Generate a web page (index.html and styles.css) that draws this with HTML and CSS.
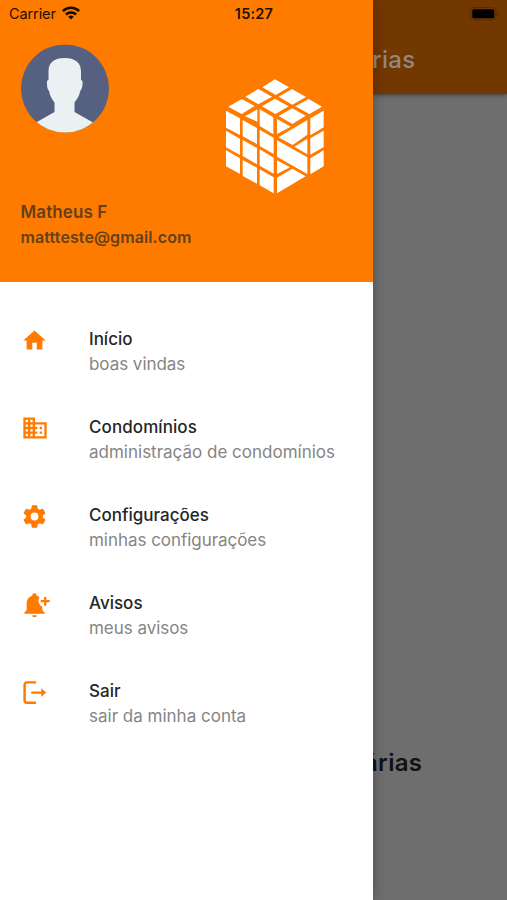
FILE: index.html
```html
<!DOCTYPE html>
<html lang="pt-BR">
<head>
<meta charset="utf-8">
<meta name="viewport" content="width=device-width, initial-scale=1">
<title>Menu</title>
<link rel="stylesheet" href="styles.css">
</head>
<body>
<div class="screen">
  <div class="page">
    <header class="appbar"><span class="appbar-title">rias</span></header>
    <main class="page-body"><span class="page-label">árias</span></main>
  </div>

  <aside class="drawer">
    <header class="profile">
      <div class="profile-top">
        <svg class="avatar" viewBox="0 0 88 88">
          <defs><clipPath id="round"><circle cx="44" cy="44" r="44"/></clipPath></defs>
          <g clip-path="url(#round)">
            <rect width="88" height="88" fill="#566080"/>
            <path fill="#e9f1f2" d="M27.500 27C27.500 18 33 13.500 43.500 13.500S60 18 60 27v8.500c1.500 0 1.800 2 1.500 4.500-.3 3-1 5.500-2.200 6.200C58.500 51 56 54.500 53.500 58v9.500L72 78v12H15V78l18.500-10.500V58C31 54.500 28.700 51 28 46.200 26.700 45.500 26.200 43 26 40c-.2-2.500 0-4.500 1.500-4.500z"/>
          </g>
        </svg>
        <svg class="logo" viewBox="0 0 360 390" fill="#fff">
          <path d="M180 28l42 24-40 23-40-23zM130 57l41 23-41 23-39-23zM231 57l42 24-41 23-41-24zM80 87l39 21-39 24-40-22zM180 86l41 23-40 23-40-23zM281 87l40 23-38 22-42-23zM232 115l40 22-40 25-41-24z"/>
          <path d="M33 122l42 23v50l-42-22zM33 182l42 24v49l-42-23zM33 241l42 24v47l-42-23zM90 139l37-21v37zM83 150l43 24v48l-43-23zM83 210l43 24v49l-43-25zM83 270l43 23v48l-43-23zM134 118l41 24v51l-41-25zM134 179l42 24v49l-42-24zM134 238l42 25v48l-42-24zM134 298l42 24v48l-42-24z"/>
          <path d="M186 147l41 23-41 22zM190 202l87-52v44l-44 31zM238 230l39-24v47zM186 211l91 51v50l-91-52zM186 271l39 21-39 20zM186 323l46-27 40 23-86 51zM286 145l40-23v50l-40 24zM286 205l40-23v49l-40 23zM286 265l40-24v48l-40 24z"/>
        </svg>
      </div>
      <div class="name">Matheus F</div>
      <div class="email">mattteste@gmail.com</div>
    </header>

    <nav class="menu">
      <a class="item">
        <svg class="icon" viewBox="0 0 24 24"><path d="M10 20v-6h4v6h5v-8h3L12 3 2 12h3v8z"/></svg>
        <span class="text"><span class="title">Início</span><span class="sub">boas vindas</span></span>
      </a>
      <a class="item">
        <svg class="icon wide" viewBox="0 0 24 24"><path d="M12 7V3H2v18h20V7H12zM6 19H4v-2h2v2zm0-4H4v-2h2v2zm0-4H4V9h2v2zm0-4H4V5h2v2zm4 12H8v-2h2v2zm0-4H8v-2h2v2zm0-4H8V9h2v2zm0-4H8V5h2v2zm10 12h-8v-2h2v-2h-2v-2h2v-2h-2V9h8v10zm-2-8h-2v2h2v-2zm0 4h-2v2h2v-2z"/></svg>
        <span class="text"><span class="title spaced">Condomínios</span><span class="sub even">administração de condomínios</span></span>
      </a>
      <a class="item">
        <svg class="icon" viewBox="0 0 24 24"><path d="M19.430 12.980c.04-.32.07-.64.07-.98s-.03-.66-.07-.98l2.110-1.650c.19-.15.24-.42.12-.64l-2-3.460c-.12-.22-.39-.3-.61-.22l-2.490 1c-.52-.4-1.080-.73-1.690-.98l-.38-2.650C14.460 2.180 14.250 2 14 2h-4c-.25 0-.46.18-.49.42l-.38 2.650c-.61.25-1.170.59-1.690.98l-2.490-1c-.23-.09-.49 0-.61.22l-2 3.460c-.13.22-.07.49.12.64l2.110 1.650c-.04.32-.07.65-.07.98s.03.66.07.98l-2.110 1.650c-.19.15-.24.42-.12.64l2 3.460c.12.22.39.3.61.22l2.490-1c.52.4 1.080.73 1.690.98l.38 2.650c.03.24.24.42.49.42h4c.25 0 .46-.18.49-.42l.38-2.650c.61-.25 1.170-.59 1.690-.98l2.490 1c.23.09.49 0 .61-.22l2-3.460c.12-.22.07-.49-.12-.64l-2.110-1.650zM12 15.500a3.500 3.500 0 1 1 0-7 3.500 3.500 0 0 1 0 7z"/></svg>
        <span class="text"><span class="title">Configurações</span><span class="sub">minhas configurações</span></span>
      </a>
      <a class="item">
        <svg class="icon" viewBox="0 0 24 24"><path d="M10 21.500h4a2 1.800 0 0 1-4 0zM21 19v1.300H3V19l2-2v-6c0-3.100 2-5.800 5-6.700V4a2 2 0 0 1 4 0v.3c.9.300 1.700.7 2.400 1.300A6 6 0 0 0 19 14.200V17zM17.500 8.100h3V5.300h2v2.800h3v2h-3v3h-2v-3h-3z"/></svg>
        <span class="text"><span class="title">Avisos</span><span class="sub">meus avisos</span></span>
      </a>
      <a class="item">
        <svg class="icon" viewBox="0 0 24 24"><path d="M12.500 3H5.200a2 2 0 0 0-2 2v14.200a2 2 0 0 0 2 2h7.300M10 12.100h9" fill="none" stroke="#ff7b00" stroke-width="2.200" stroke-linecap="round"/><path d="M18 8.300l4.300 3.800-4.300 3.800z"/></svg>
        <span class="text"><span class="title">Sair</span><span class="sub even">sair da minha conta</span></span>
      </a>
    </nav>
  </aside>

  <div class="statusbar">
    <div class="carrier">Carrier
      <svg class="wifi" viewBox="0 0 18 14" fill="none" stroke="#150b00" stroke-width="2.500"><path d="M.9 5.200a11.500 11.500 0 0 1 16.200 0M3.900 8.500a7.200 7.200 0 0 1 10.200 0"/><path d="M9 13.500L6.200 10.800a4 4 0 0 1 5.600 0z" fill="#150b00" stroke="none"/></svg>
    </div>
    <div class="clock">15:27</div>
    <svg class="battery" viewBox="0 0 30 14"><rect x=".5" y=".5" width="25.500" height="12.500" rx="3.500" fill="none" stroke="#5a2c00"/><rect x="2.300" y="2.300" width="22" height="9" rx="1.500" fill="#000"/><path d="M27.500 4.700q2 2 0 4z" fill="#4a2400"/></svg>
  </div>
</div>
</body>
</html>
```

FILE: styles.css
```css
* { box-sizing: border-box; }
body { margin: 0; font-family: Inter, "Liberation Sans", sans-serif; }
.screen { position: relative; width: 507px; height: 900px; overflow: hidden; background: #6e6e6e; }
.page { display: flex; flex-direction: column; height: 100%; padding-left: 372px; }
.appbar { height: 94px; background: #733700; box-shadow: 0 1px 4px rgba(0,0,0,.45); display: flex; align-items: flex-end; padding-bottom: 18px; }
.appbar-title { color: #918981; font-size: 24px; line-height: 32px; font-weight: 500; letter-spacing: .3px; }
.page-body { flex: 1; display: flex; align-items: flex-end; padding-bottom: 120px; }
.page-label { font-size: 24px; line-height: 34px; font-weight: 600; color: #121212; margin-left: -8px; letter-spacing: .3px; }

.drawer { position: absolute; top: 0; left: 0; width: 373px; height: 900px; background: #fff; box-shadow: 0 0 12px rgba(0,0,0,.3); }
.profile { height: 282px; background: #ff7b00; padding: 44px 0 0 20.500px; }
.profile-top { display: flex; height: 156.400px; }
.avatar { width: 88px; height: 89px; }
.logo { width: 120px; height: 130px; margin: 26px 0 0 106.400px; }
.name, .email { color: #634018; font-weight: 600; line-height: 25px; white-space: nowrap; }
.name { font-size: 17px; letter-spacing: .1px; }
.email { font-size: 16px; letter-spacing: .1px; }

.menu { padding-top: 45px; }
.item { display: flex; height: 88px; }
.icon { width: 27px; height: 27px; margin: 0 41px 0 21px; fill: #ff7b00; overflow: visible; flex: none; }
.icon.wide { width: 30px; height: 28px; margin: -1px 39px 0 20px; }
.text { display: flex; flex-direction: column; align-items: flex-start; }
.title, .sub { line-height: 25px; white-space: nowrap; }
.title { font-size: 17px; font-weight: 500; color: #262626; }
.title.spaced { letter-spacing: .08px; }
.sub { font-size: 17px; color: #858585; letter-spacing: -.04px; }
.sub.even { letter-spacing: 0; }

.statusbar { position: absolute; top: 0; left: 0; width: 507px; height: 27px; display: grid; grid-template-columns: 1fr auto 1fr; align-items: center; padding: 0 7px 0 9px; color: #211000; font-size: 14.500px; }
.carrier { display: flex; align-items: center; gap: 6px; letter-spacing: -.1px; }
.wifi { width: 18px; height: 14px; margin-top: -1px; }
.clock { font-weight: 600; letter-spacing: .2px; margin-left: -1px; }
.battery { width: 30px; height: 14px; justify-self: end; }
```
